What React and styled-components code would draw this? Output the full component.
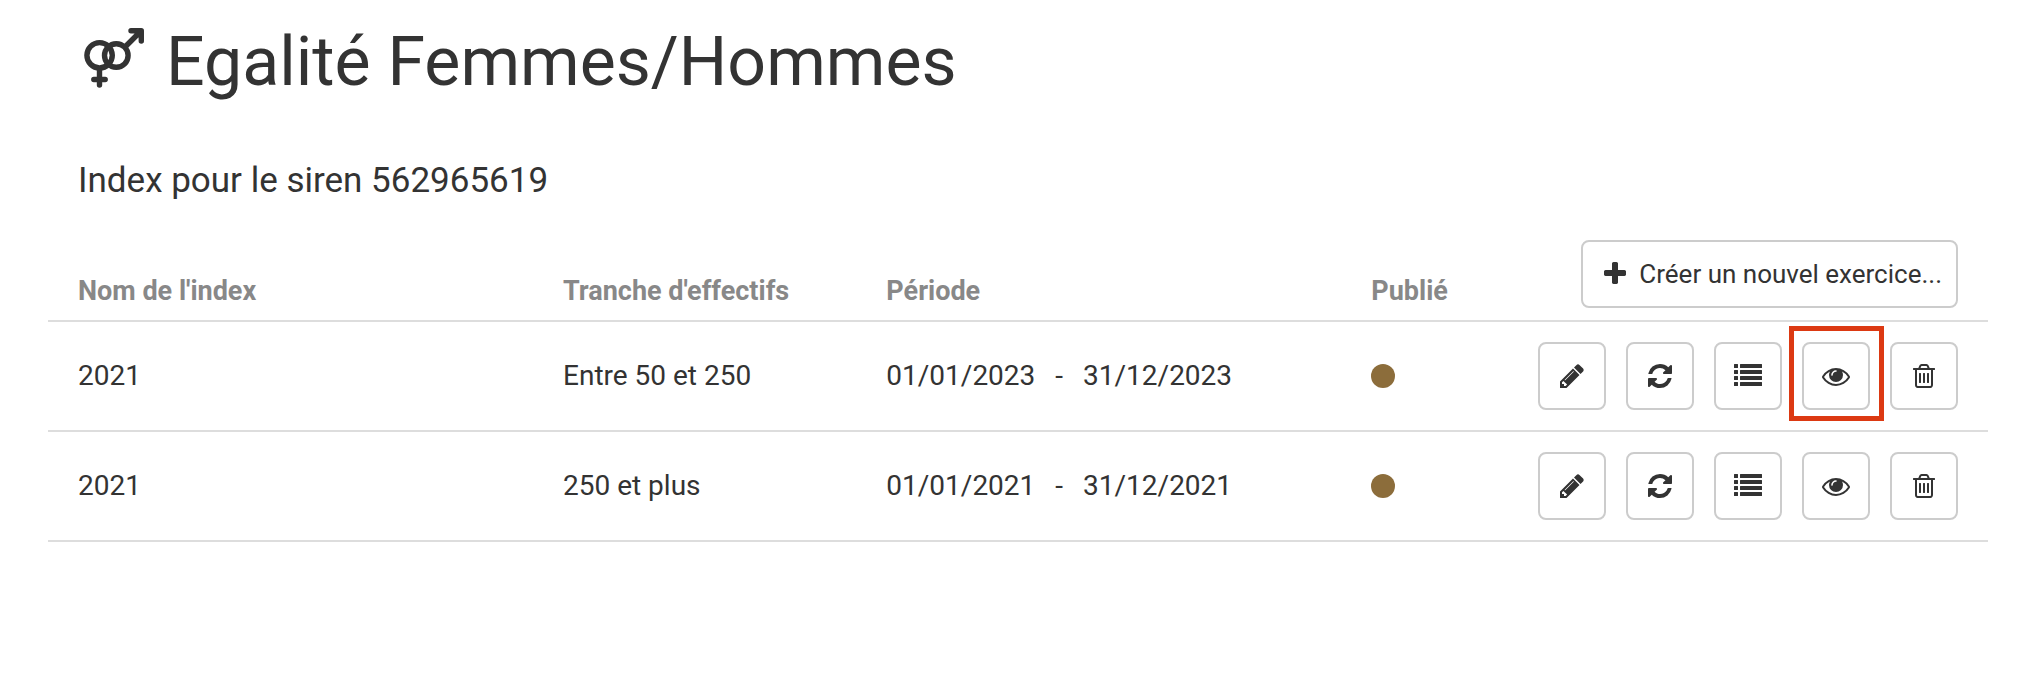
import React, { useState } from 'react';
import styled, { createGlobalStyle } from 'styled-components';

const GlobalStyle = createGlobalStyle`
  * {
    box-sizing: border-box;
  }

  body {
    margin: 0;
    background: #fff;
    color: #333;
    font-family: Roboto, 'Liberation Sans', sans-serif;
    font-size: 28px;
    line-height: 40px;
  }
`;

const Page = styled.main`
  padding: 18px 50px 0 48px;
`;

const Title = styled.h1`
  display: flex;
  align-items: center;
  gap: 22px;
  margin: 0;
  padding: 0 36px;
  font-size: 68px;
  font-weight: 400;
  line-height: 88px;
`;

const TitleIcon = styled.svg`
  width: 60px;
  height: 60px;
  flex: none;
  margin-bottom: 8px;
  fill: none;
  stroke: currentColor;
  stroke-width: 5.4;
  stroke-linecap: round;
  stroke-linejoin: round;
`;

const Subtitle = styled.h2`
  margin: 51px 0 35px;
  padding: 0 30px;
  font-size: 35px;
  font-weight: 400;
  line-height: 48px;
`;

const Table = styled.table`
  width: 100%;
  border-collapse: collapse;
  table-layout: fixed;
`;

const Row = styled.tr`
  border-bottom: 2px solid #ddd;
`;

const HeadCell = styled.th`
  width: ${props => props.$width};
  padding: 0 30px 9px;
  color: #888;
  font-size: 27px;
  font-weight: 700;
  text-align: left;
  vertical-align: bottom;
`;

const ActionHead = styled.td`
  padding: 0 30px 12px 0;
`;

const Cell = styled.td`
  padding: 20px 30px;
  white-space: nowrap;
`;

const ActionCell = styled.td`
  padding: 20px 30px 20px 0;
`;

const Actions = styled.div`
  display: flex;
  justify-content: flex-end;
  gap: 20px;
`;

const Period = styled.span`
  display: flex;
  gap: 20px;
`;

const Dot = styled.span`
  display: block;
  width: 24px;
  height: 24px;
  border-radius: 50%;
  background: #8c6d3b;
`;

const Button = styled.button`
  display: flex;
  align-items: center;
  justify-content: center;
  gap: 10px;
  height: 68px;
  padding: 0 14px 0 18px;
  border: 2px solid #ccc;
  border-radius: 8px;
  background: #fff;
  color: #333;
  font: inherit;
  font-size: 26px;
  white-space: nowrap;
  cursor: pointer;

  &:hover {
    background: #e6e6e6;
  }
`;

const IconButton = styled(Button)`
  position: relative;
  width: 68px;
  padding: 0;

  ${props =>
    props.$highlighted &&
    `
    &::after {
      content: '';
      position: absolute;
      inset: -18px -16px -13px -15px;
      border: 5px solid #dc3912;
      pointer-events: none;
    }
  `}
`;

const Icon = styled.svg`
  width: 28px;
  height: 28px;
  flex: none;
  fill: currentColor;
`;

const icons = {
  plus:
    'M1600 736v192q0 40-28 68t-68 28h-416v416q0 40-28 68t-68 28h-192q-40 0-68-28t-28-68v-416h-416q-40 0-68-28t-28-68v-192q0-40 28-68t68-28h416v-416q0-40 28-68t68-28h192q40 0 68 28t28 68v416h416q40 0 68 28t28 68z',
  pencil:
    'M491 1536l91-91-235-235-91 91v107h128v128h107zm523-928q0-22-22-22-10 0-17 7l-542 542q-7 7-7 17 0 22 22 22 10 0 17-7l542-542q7-7 7-17zm-54-192l416 416-832 832h-416v-416zm683 96q0 53-37 90l-166 166-416-416 166-165q36-38 90-38 53 0 91 38l235 234q37 39 37 91z',
  refresh:
    'M1639 1056q0 5-1 7-64 268-268 434.5t-478 166.5q-146 0-282.5-55t-243.5-157l-129 129q-19 19-45 19t-45-19-19-45v-448q0-26 19-45t45-19h448q26 0 45 19t19 45-19 45l-137 137q71 66 161 102t187 36q134 0 250-65t186-179q11-17 53-117 8-23 30-23h192q13 0 22.5 9.5t9.5 22.5zm25-800v448q0 26-19 45t-45 19h-448q-26 0-45-19t-19-45 19-45l138-138q-148-137-349-137-134 0-250 65t-186 179q-11 17-53 117-8 23-30 23h-199q-13 0-22.5-9.5t-9.5-22.5v-7q65-268 270-434.5t480-166.5q146 0 284 55.5t245 156.5l130-129q19-19 45-19t45 19 19 45z',
  list:
    'M32 128h192q32 0 32 32v192q0 32-32 32h-192q-32 0-32-32v-192q0-32 32-32zM32 512h192q32 0 32 32v192q0 32-32 32h-192q-32 0-32-32v-192q0-32 32-32zM32 896h192q32 0 32 32v192q0 32-32 32h-192q-32 0-32-32v-192q0-32 32-32zM32 1280h192q32 0 32 32v192q0 32-32 32h-192q-32 0-32-32v-192q0-32 32-32zM416 128h1344q32 0 32 32v192q0 32-32 32h-1344q-32 0-32-32v-192q0-32 32-32zM416 512h1344q32 0 32 32v192q0 32-32 32h-1344q-32 0-32-32v-192q0-32 32-32zM416 896h1344q32 0 32 32v192q0 32-32 32h-1344q-32 0-32-32v-192q0-32 32-32zM416 1280h1344q32 0 32 32v192q0 32-32 32h-1344q-32 0-32-32v-192q0-32 32-32z',
  eye:
    'M1664 960q-152-236-381-353 61 104 61 225 0 185-131.5 316.5t-316.5 131.5-316.5-131.5-131.5-316.5q0-121 61-225-229 117-381 353 133 205 333.5 326.5t434.5 121.5 434.5-121.5 333.5-326.5zm-720-384q0-20-14-34t-34-14q-125 0-214.5 89.5t-89.5 214.5q0 20 14 34t34 14 34-14 14-34q0-86 61-147t147-61q20 0 34-14t14-34zm848 384q0 34-20 69-140 230-376.5 368.5t-499.5 138.5-499.5-139-376.5-368q-20-35-20-69t20-69q140-229 376.5-368t499.5-139 499.5 139 376.5 368q20 35 20 69z',
  trash:
    'M704 736v576q0 14-9 23t-23 9h-64q-14 0-23-9t-9-23v-576q0-14 9-23t23-9h64q14 0 23 9t9 23zm256 0v576q0 14-9 23t-23 9h-64q-14 0-23-9t-9-23v-576q0-14 9-23t23-9h64q14 0 23 9t9 23zm256 0v576q0 14-9 23t-23 9h-64q-14 0-23-9t-9-23v-576q0-14 9-23t23-9h64q14 0 23 9t9 23zm128 724v-948h-896v948q0 22 7 40.5t14.5 27 10.5 8.5h832q3 0 10.5-8.5t14.5-27 7-40.5zm-672-1076h448l-48-117q-7-9-17-11h-317q-10 2-17 11zm928 32v64q0 14-9 23t-23 9h-96v948q0 83-47 143.5t-113 60.5h-832q-66 0-113-58.5t-47-141.5v-952h-96q-14 0-23-9t-9-23v-64q0-14 9-23t23-9h309l70-167q15-37 54-63t79-26h320q40 0 79 26t54 63l70 167h309q14 0 23 9t9 23z',
};

const actions = [
  { icon: 'pencil', label: 'Modifier' },
  { icon: 'refresh', label: 'Actualiser' },
  { icon: 'list', label: 'Détails' },
  { icon: 'eye', label: 'Visualiser' },
  { icon: 'trash', label: 'Supprimer' },
];

const exercices = [
  {
    id: 1,
    name: '2021',
    range: 'Entre 50 et 250',
    start: '01/01/2023',
    end: '31/12/2023',
  },
  {
    id: 2,
    name: '2021',
    range: '250 et plus',
    start: '01/01/2021',
    end: '31/12/2021',
  },
];

const Glyph = ({ name }) => (
  <Icon viewBox="0 0 1792 1792" aria-hidden="true">
    <path d={icons[name]} />
  </Icon>
);

const VenusMars = () => (
  <TitleIcon viewBox="0 0 60 60" aria-hidden="true">
    <circle cx="15.6" cy="27.3" r="12.7" />
    <circle cx="32.3" cy="27.5" r="11.8" />
    <path d="M15.5 41v16M9.8 51.5h11.4M42 18l15-15M47 2.7h10.3v10.3" />
  </TitleIcon>
);

const Exercice = ({ exercice, highlighted, onSelect }) => (
  <Row>
    <Cell>{exercice.name}</Cell>
    <Cell>{exercice.range}</Cell>
    <Cell>
      <Period>
        <span>{exercice.start}</span>
        <span>-</span>
        <span>{exercice.end}</span>
      </Period>
    </Cell>
    <Cell>
      <Dot role="img" aria-label="Non publié" />
    </Cell>
    <ActionCell>
      <Actions>
        {actions.map(({ icon, label }) => (
          <IconButton
            key={icon}
            type="button"
            aria-label={label}
            $highlighted={highlighted && icon === 'eye'}
            onClick={() => icon === 'eye' && onSelect(exercice.id)}
          >
            <Glyph name={icon} />
          </IconButton>
        ))}
      </Actions>
    </ActionCell>
  </Row>
);

const App = () => {
  const [selected, setSelected] = useState(1);

  return (
    <Page>
      <GlobalStyle />
      <Title>
        <VenusMars />
        Egalité Femmes/Hommes
      </Title>
      <Subtitle>Index pour le siren 562965619</Subtitle>
      <Table>
        <thead>
          <Row>
            <HeadCell $width="25%">Nom de l'index</HeadCell>
            <HeadCell $width="16.6667%">Tranche d'effectifs</HeadCell>
            <HeadCell $width="25%">Période</HeadCell>
            <HeadCell $width="8.3333%">Publié</HeadCell>
            <ActionHead>
              <Actions>
                <Button type="button">
                  <Glyph name="plus" />
                  Créer un nouvel exercice...
                </Button>
              </Actions>
            </ActionHead>
          </Row>
        </thead>
        <tbody>
          {exercices.map(exercice => (
            <Exercice
              key={exercice.id}
              exercice={exercice}
              highlighted={exercice.id === selected}
              onSelect={setSelected}
            />
          ))}
        </tbody>
      </Table>
    </Page>
  );
};

export default App;
